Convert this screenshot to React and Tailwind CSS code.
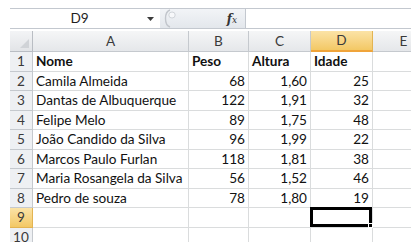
import React from 'react';

const cols = [
  { key: 'A', w: 'w-[156px]' },
  { key: 'B', w: 'w-[60px]' },
  { key: 'C', w: 'w-[62px]' },
  { key: 'D', w: 'w-[62px]' },
  { key: 'E', w: 'w-[62px]' },
];

const rows = [
  ['Nome', 'Peso', 'Altura', 'Idade'],
  ['Camila Almeida', '68', '1,60', '25'],
  ['Dantas de Albuquerque', '122', '1,91', '32'],
  ['Felipe Melo', '89', '1,75', '48'],
  ['João Candido da Silva', '96', '1,99', '22'],
  ['Marcos Paulo Furlan', '118', '1,81', '38'],
  ['Maria Rosangela da Silva', '56', '1,52', '46'],
  ['Pedro de souza', '78', '1,80', '19'],
  ['', '', '', ''],
  ['', '', '', ''],
];

const App = () => {
  return (
    <div className="w-[411px] h-[242px] overflow-hidden bg-white pt-[8px] pl-[10px] font-['Lato',sans-serif] text-[13.6px] text-[#111]">
      {/* formula bar */}
      <div className="flex h-[21px] w-[420px] border-y border-[#c3c8cf]">
        <div className="flex w-[150px] items-center bg-white">
          <span className="flex-1 text-center text-[13.6px] text-[#1e1e1e] pl-[2px]">D9</span>
          <svg width="7" height="4" viewBox="0 0 7 4" className="mr-[6px]">
            <path d="M0 0h7L3.5 4z" fill="#3b3b3b" />
          </svg>
        </div>
        <div className="flex w-[85px] items-center bg-gradient-to-b from-[#f2f4f7] to-[#e3e7ec]">
          <svg width="16" height="19" viewBox="0 0 16 19" className="ml-[2px]">
            <path d="M8 1 C2 3 2 16 8 18" stroke="#c2c6cc" strokeWidth="1.4" fill="none" />
            <ellipse cx="10" cy="6" rx="3.2" ry="3" fill="#f7f8fa" stroke="#c7cbd1" strokeWidth="0.8" />
          </svg>
          <span className="ml-auto mr-[8px] font-['DejaVu_Serif',serif] italic font-bold text-[12px] text-[#333] leading-none">
            f<span className="text-[9px] font-normal">x</span>
          </span>
        </div>
        <div className="flex-1 bg-white border-l border-[#c3c8cf]" />
      </div>

      <div className="h-[2px]" />

      {/* sheet */}
      <div className="w-[430px]">
        {/* header row */}
        <div className="flex h-[21px]">
          <div className="relative w-[23px] border-r border-b border-[#b9bdc3] bg-gradient-to-b from-[#f3f4f6] to-[#e2e4e7]">
            <svg width="9" height="9" viewBox="0 0 9 9" className="absolute right-[3px] bottom-[3px]">
              <path d="M9 0V9H0z" fill="#d0d3d7" />
            </svg>
          </div>
          {cols.map(c => (
            <div
              key={c.key}
              className={
                c.key === 'D'
                  ? `${c.w} flex items-center justify-center border-r border-b-2 border-r-[#e3b452] border-b-[#f0a43a] bg-gradient-to-b from-[#fbe3a6] to-[#f3c864] text-[13.6px] text-[#3a3a3a]`
                  : `${c.w} flex items-center justify-center border-r border-b border-[#c5c9ce] bg-gradient-to-b from-[#f5f6f7] to-[#e5e7ea] text-[13.6px] text-[#3a3a3a]`
              }
            >
              {c.key}
            </div>
          ))}
        </div>

        {rows.map((r, i) => {
          const n = i + 1;
          const sel = n === 9;
          return (
            <div key={n} className="flex h-[19.5px]">
              <div
                className={
                  sel
                    ? 'w-[23px] flex items-center justify-center border-r border-b border-[#e3b452] bg-gradient-to-b from-[#fbe3a6] to-[#f3c864] text-[13.6px] text-[#3a3a3a]'
                    : 'w-[23px] flex items-center justify-center border-r border-b border-[#c5c9ce] bg-[#eef0f3] text-[13.6px] text-[#3a3a3a]'
                }
              >
                {n}
              </div>
              <div className={`w-[156px] flex items-center px-[3px] border-r border-b border-[#dadcdd] whitespace-nowrap ${n === 1 ? 'font-bold' : ''}`}>
                {r[0]}
              </div>
              <div className={`w-[60px] flex items-center px-[3px] border-r border-b border-[#dadcdd] whitespace-nowrap ${n === 1 ? 'font-bold justify-start' : 'justify-end'}`}>
                {r[1]}
              </div>
              <div className={`w-[62px] flex items-center px-[3px] border-r border-b border-[#dadcdd] whitespace-nowrap ${n === 1 ? 'font-bold justify-start' : 'justify-end'}`}>
                {r[2]}
              </div>
              <div className={`relative w-[62px] flex items-center px-[3px] border-r border-b border-[#dadcdd] whitespace-nowrap ${n === 1 ? 'font-bold justify-start' : 'justify-end'}`}>
                {r[3]}
                {sel && (
                  <div className="absolute -left-[1px] -top-[1px] right-0 bottom-0 border-[3px] border-black">
                    <div className="absolute -right-[4px] -bottom-[4px] w-[5px] h-[5px] bg-black border border-white" />
                  </div>
                )}
              </div>
              <div className="w-[62px] border-r border-b border-[#dadcdd]" />
            </div>
          );
        })}
      </div>
    </div>
  );
};

export default App;
